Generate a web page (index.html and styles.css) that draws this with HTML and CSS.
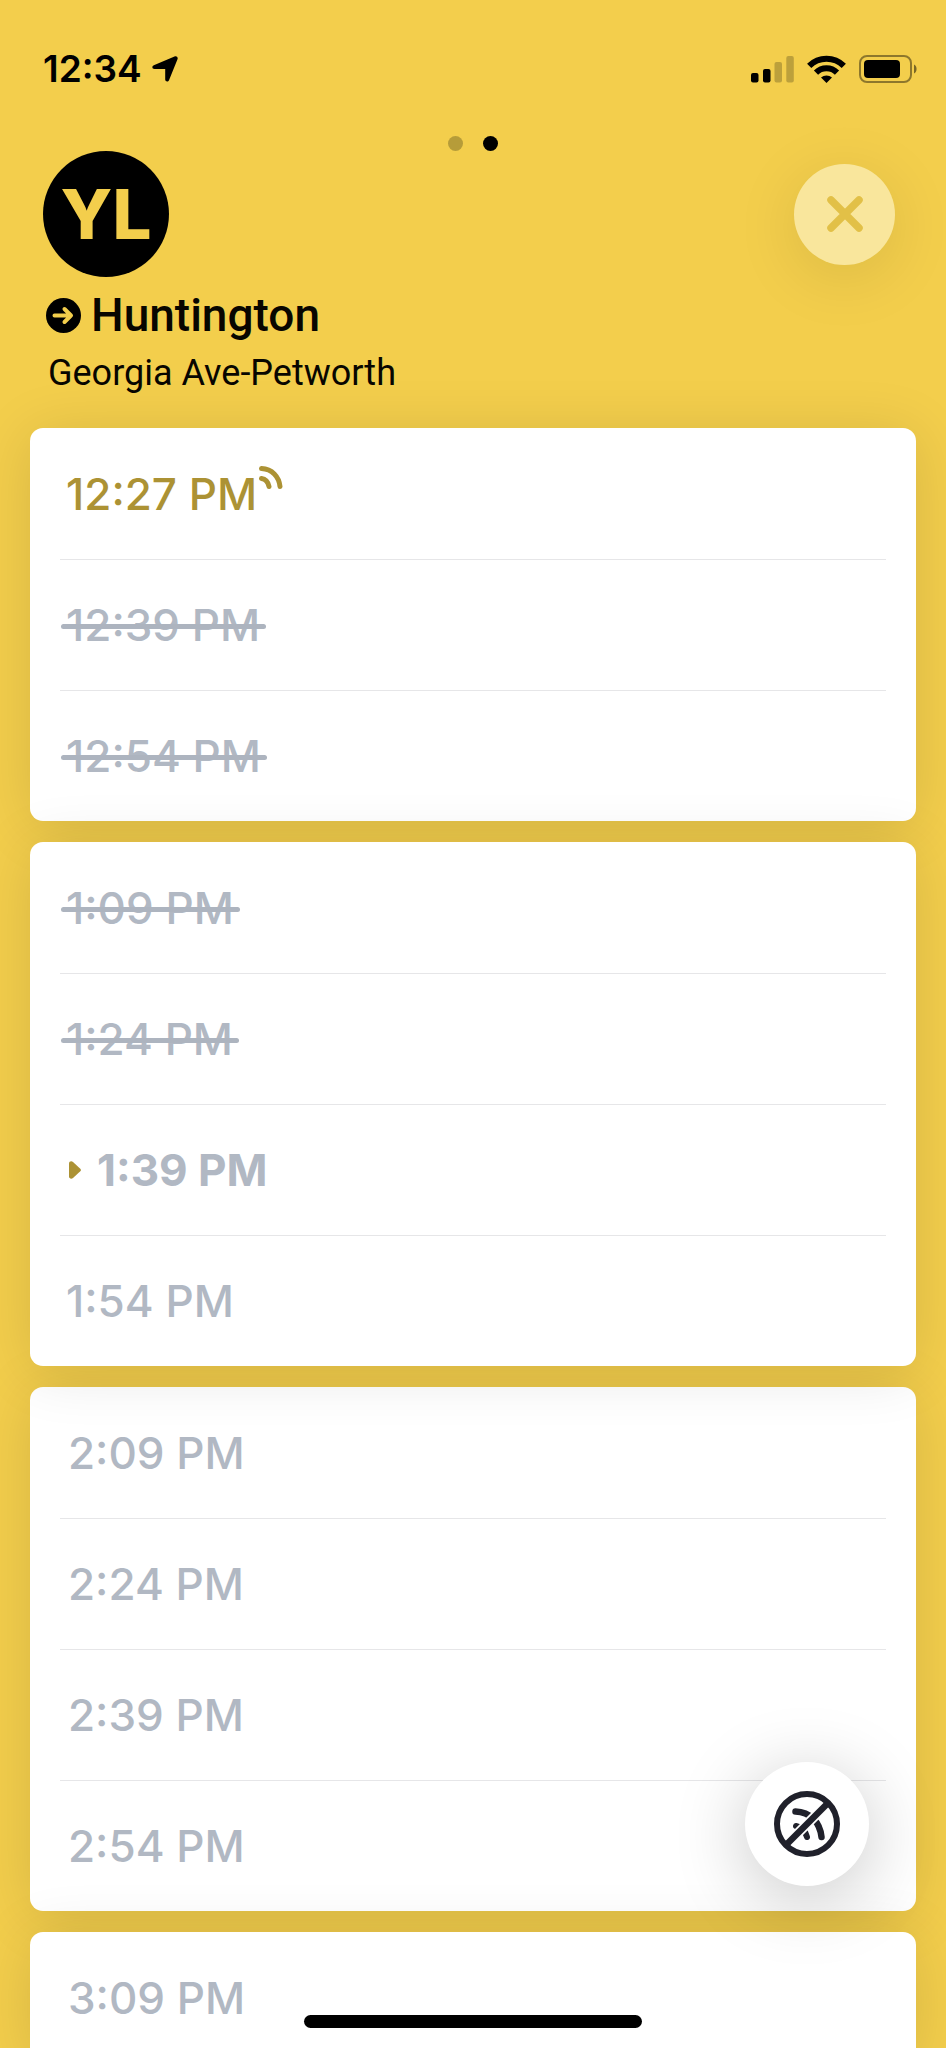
FILE: index.html
```html
<!DOCTYPE html>
<html lang="en">
<head>
<meta charset="utf-8">
<meta name="viewport" content="width=device-width, initial-scale=1">
<title>Huntington departures</title>
<link rel="stylesheet" href="styles.css">
</head>
<body>
<div class="screen">
  <div class="status-bar">
    <div class="status-left">
      <span>12:34</span>
      <svg width="26" height="26" viewBox="0 0 26 26" aria-hidden="true"><path d="M1.800 9.200 22.500.4c2-.8 3.800.9 3 2.900L17 24.300c-.8 2-3.800 1.500-3.800-.7V12.900H2.500C0 12.900-.4 10.200 1.800 9.200z"/></svg>
    </div>
    <div class="status-right">
      <svg width="43" height="28" viewBox="0 0 43 28" aria-hidden="true"><rect y="18" width="7.500" height="9.500" rx="2"/><rect x="12" y="14" width="7.500" height="13.500" rx="2"/><g opacity=".22"><rect x="23.500" y="7" width="7.500" height="20.500" rx="2"/><rect x="35.300" y="1" width="7.500" height="26.500" rx="2"/></g></svg>
      <svg width="39" height="28" viewBox="0 0 39 28" aria-hidden="true"><g fill="none" stroke="#000" stroke-width="6"><path d="M2.200 10.800a24.500 24.500 0 0 1 34.600 0"/><path d="M9 17.600a15 15 0 0 1 21 0"/></g><path d="M14 22.600a8 8 0 0 1 11 0L19.500 28z"/></svg>
      <svg width="58" height="28" viewBox="0 0 58 28" aria-hidden="true"><rect x="1" y="1" width="51" height="26" rx="7" fill="none" stroke="#000" stroke-opacity=".42" stroke-width="2"/><rect x="5" y="5" width="36" height="18" rx="4"/><path d="M55 9.500c3.400 1.500 3.400 7.500 0 9z" opacity=".5"/></svg>
    </div>
  </div>
  <div class="pager" aria-hidden="true"><span class="dot"></span><span class="dot dot-active"></span></div>

  <header class="header">
    <div class="header-top">
      <div class="line-badge">YL</div>
      <button class="close" type="button" aria-label="Close">
        <svg width="36" height="36" viewBox="0 0 36 36"><path d="M4 4 32 32M32 4 4 32" stroke="#e2c047" stroke-width="7.500" stroke-linecap="round"/></svg>
      </button>
    </div>
    <h1 class="title">
      <svg width="35" height="35" viewBox="0 0 35 35" aria-hidden="true"><circle cx="17.500" cy="17.500" r="17.500"/><path d="M8.500 17.500H25M18.500 11 25 17.500 18.500 24" fill="none" stroke="#f3ce4c" stroke-width="4" stroke-linecap="round" stroke-linejoin="round"/></svg>
      <span>Huntington</span>
    </h1>
    <p class="stop">Georgia Ave-Petworth</p>
  </header>

  <main class="schedule">
    <ul class="card">
      <li class="row row-live"><time>12:27 PM</time><svg class="live" width="24" height="24" viewBox="0 0 24 24" aria-hidden="true"><path d="M2.500 2.500c10.500.5 17.500 8 18.500 18M2.500 12.500c4 .5 6.500 3.500 7.500 8" fill="none" stroke="#ac9234" stroke-width="5" stroke-linecap="round"/></svg></li>
      <li class="row"><s>12:39 PM</s></li>
      <li class="row"><s>12:54 PM</s></li>
    </ul>
    <ul class="card card-raised">
      <li class="row"><s>1:09 PM</s></li>
      <li class="row"><s>1:24 PM</s></li>
      <li class="row row-next"><svg width="12" height="18" viewBox="0 0 12 18" aria-hidden="true"><path d="M0 2.500C0 .5 2.300-.5 4 1L11.300 7.700q1.300 1.300 0 2.600L4 17C2.300 18.500 0 17.500 0 15.500z" fill="#ac9234"/></svg><time>1:39 PM</time></li>
      <li class="row"><time>1:54 PM</time></li>
    </ul>
    <ul class="card">
      <li class="row row-late"><time>2:09 PM</time></li>
      <li class="row row-late"><time>2:24 PM</time></li>
      <li class="row row-late"><time>2:39 PM</time></li>
      <li class="row row-late"><time>2:54 PM</time></li>
    </ul>
    <ul class="card">
      <li class="row row-late"><time>3:09 PM</time></li>
    </ul>
  </main>

  <button class="fab" type="button" aria-label="Real-time off">
    <svg width="66" height="66" viewBox="0 0 66 66"><g fill="none" stroke="#20212b" stroke-width="6.500" stroke-linecap="round"><path d="M21.500 20.500C36 21 46 31 47.500 46"/><path d="M22 35C28 36 31.500 40 33 46" stroke-width="6"/></g><path d="M52 14 14 52" stroke="#fff" stroke-width="10"/><path d="M55.500 10.500 11 55" stroke="#20212b" stroke-width="6.500"/><circle cx="33" cy="33" r="30" fill="none" stroke="#20212b" stroke-width="6"/></svg>
  </button>
  <div class="home-indicator"></div>
</div>
</body>
</html>
```
FILE: styles.css
```css
* { box-sizing: border-box; }

body {
  margin: 0;
  background: #f3ce4c;
  color: #080600;
  font-family: Inter, "Liberation Sans", sans-serif;
}

.screen {
  position: relative;
  display: flex;
  flex-direction: column;
  height: 100vh;
  overflow: hidden;
}

svg { display: block; flex: none; }

.status-bar {
  flex: none;
  display: flex;
  justify-content: space-between;
  align-items: center;
  height: 136px;
  padding: 2px 29px 0 43px;
}

.status-left {
  display: flex;
  align-items: center;
  gap: 10px;
  font-size: 37px;
  font-weight: 600;
  line-height: 44px;
  color: #000;
}

.status-right { display: flex; gap: 13px; }

.pager { flex: none; display: flex; justify-content: center; gap: 20px; }

.dot { width: 15px; height: 15px; border-radius: 50%; background: #b69c39; }
.dot-active { background: #000; }

.header { flex: none; padding: 0 51px 33px 43px; }

.header-top { display: flex; justify-content: space-between; align-items: center; }

.line-badge {
  display: grid;
  place-items: center;
  width: 126px;
  height: 126px;
  border-radius: 50%;
  background: #000;
  color: #f3ce4c;
  font-size: 69px;
  font-weight: 800;
}

.close {
  display: grid;
  place-items: center;
  width: 101px;
  height: 101px;
  padding: 0;
  border: 0;
  border-radius: 50%;
  background: #f9e69c;
  box-shadow: 0 12px 64px rgba(0, 0, 0, .1);
}

.title {
  display: flex;
  align-items: center;
  gap: 10px;
  margin: 12px 0 10px;
  padding-left: 3px;
  font: 500 46px/52px Roboto, sans-serif;
}

.stop {
  margin: 0;
  padding-left: 5px;
  font: 400 36px/44px Roboto, sans-serif;
}

.schedule {
  display: flex;
  flex-direction: column;
  gap: 21px;
  padding: 0 30px;
}

.card {
  margin: 0;
  padding: 0 30px;
  list-style: none;
  border-radius: 13px;
  background: #fff;
  box-shadow: 0 6px 60px rgba(0, 0, 0, .12);
}

.card-raised { position: relative; z-index: 1; }

.row {
  display: flex;
  align-items: center;
  height: 131px;
  padding-left: 6px;
  color: #b1b8c3;
  font-size: 44px;
  font-weight: 500;
  line-height: 54px;
}

.row + .row { border-top: 1px solid #e6e6e8; }

.row-late { padding-left: 8px; }

.row-live { color: #ac9234; }
.live { margin: 0 0 32px 2px; }

.row-next { gap: 16px; padding-left: 9px; font-weight: 700; }

s { position: relative; text-decoration: none; }

s::after {
  content: "";
  position: absolute;
  top: 26px;
  left: -5px;
  right: -6px;
  height: 5px;
  border-radius: 3px;
  background: #adb4bf;
}

.fab {
  position: absolute;
  z-index: 2;
  right: 77px;
  bottom: 162px;
  display: grid;
  place-items: center;
  width: 124px;
  height: 124px;
  padding: 0;
  border: 0;
  border-radius: 50%;
  background: #fff;
  box-shadow: 0 12px 72px rgba(0, 0, 0, .22);
}

.home-indicator {
  position: absolute;
  z-index: 3;
  bottom: 20px;
  left: 50%;
  width: 338px;
  height: 13px;
  border-radius: 7px;
  background: #000;
  transform: translateX(-50%);
}
```
